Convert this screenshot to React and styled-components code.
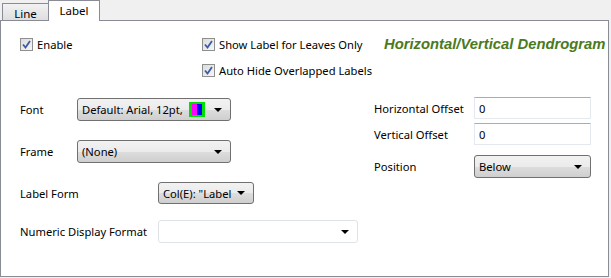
import React from "react";
import styled, { createGlobalStyle } from "styled-components";

const Global = createGlobalStyle`
  html, body { margin: 0; padding: 0; background: #f0f0f0; }
  body { font-family: "Noto Sans", "Open Sans", sans-serif; font-size: 11.2px; color: #000; }
`;

const Window = styled.div`
  width: 611px;
  height: 278px;
  background: #f0f0f0;
  overflow: hidden;
`;

const TabStrip = styled.div`
  display: flex;
  align-items: flex-end;
  height: 20px;
  padding-left: 2px;
  position: relative;
  z-index: 1;
`;

const Tab = styled.div`
  box-sizing: border-box;
  display: flex;
  align-items: center;
  justify-content: center;
  border: 1px solid #898c95;
  border-bottom: none;
  font-size: 11.5px;
  ${(p) =>
    p.$active
      ? `height: 21px; margin-bottom: -1px; width: 52px; background: #fff; padding-bottom: 2px;`
      : `height: 17px; width: 46px; border-right: none; background: linear-gradient(#f2f2f2, #dedede); padding-top: 2px;`}
`;

const Panel = styled.div`
  box-sizing: border-box;
  width: 609px;
  height: 257px;
  border: 1px solid #898c95;
  background: #fff;
  padding: 17px 0 0 19px;
`;

const TopGrid = styled.div`
  display: grid;
  grid-template-columns: 182px 182px 1fr;
  grid-template-rows: 13px 13px;
  row-gap: 13px;
`;

const Check = styled.label`
  display: flex;
  align-items: center;
  height: 13px;
  gap: 4px;
  white-space: nowrap;
`;

const Box = styled.span`
  box-sizing: border-box;
  width: 13px;
  height: 13px;
  border: 1px solid #8e8f8f;
  background: linear-gradient(135deg, #dcdcdc, #f6f6f6);
  display: flex;
  align-items: center;
  justify-content: center;
  flex: none;
`;

const Title = styled.div`
  font-family: "Liberation Sans", Arial, sans-serif;
  font-weight: bold;
  font-style: italic;
  font-size: 14.8px;
  color: #4b7a1c;
  line-height: 13px;
  white-space: nowrap;
`;

const Lower = styled.div`
  display: flex;
  margin-top: 21px;
`;

const LeftCol = styled.div`
  display: flex;
  flex-direction: column;
  width: 354px;
`;

const RightCol = styled.div`
  display: flex;
  flex-direction: column;
  margin-top: -1px;
`;

const Row = styled.div`
  display: flex;
  align-items: center;
  margin-top: ${(p) => p.$mt || 0}px;
`;

const Label = styled.span`
  width: ${(p) => p.$w}px;
  flex: none;
  white-space: nowrap;
`;

const Combo = styled.div`
  box-sizing: border-box;
  position: relative;
  width: ${(p) => p.$w}px;
  height: ${(p) => p.$h || 23}px;
  border: 1px solid ${(p) => (p.$plain ? "#dfe3e8" : "#707070")};
  border-radius: 3px;
  background: ${(p) => (p.$plain ? "#fff" : "linear-gradient(#f2f2f2 0%, #ebebeb 50%, #dddddd 51%, #cfcfcf 100%)")};
  display: flex;
  align-items: center;
  padding: 0 18px 0 4px;
  white-space: nowrap;
`;

const ComboText = styled.span`
  flex: 1;
  min-width: 0;
  overflow: hidden;
`;

const Arrow = styled.span`
  position: absolute;
  right: 8px;
  top: 50%;
  margin-top: -2px;
  width: 0;
  height: 0;
  border-left: 4px solid transparent;
  border-right: 4px solid transparent;
  border-top: 4px solid #000;
`;

const Swatch = styled.span`
  box-sizing: border-box;
  width: 16px;
  height: 15px;
  border: 2px solid #00e000;
  border-left-width: 3px;
  border-right-width: 3px;
  background: linear-gradient(90deg, #ff00ff 0 50%, #0000ff 50% 100%);
  margin-right: 7px;
  flex: none;
`;

const Input = styled.div`
  box-sizing: border-box;
  width: 117px;
  height: 22px;
  border: 1px solid #e3e9ef;
  border-top-color: #abadb3;
  background: #fff;
  display: flex;
  align-items: center;
  padding-left: 4px;
`;

const CheckMark = () => (
  <svg width="9" height="9" viewBox="0 0 9 9">
    <path d="M1 4.5 L3.5 7.5 L8 1" fill="none" stroke="#3c5aa6" strokeWidth="1.8" />
  </svg>
);

const CheckItem = ({ children }) => (
  <Check>
    <Box>
      <CheckMark />
    </Box>
    {children}
  </Check>
);

export default function App() {
  return (
    <Window>
      <Global />
      <TabStrip>
        <Tab>Line</Tab>
        <Tab $active>Label</Tab>
      </TabStrip>
      <Panel>
        <TopGrid>
          <CheckItem>Enable</CheckItem>
          <CheckItem>Show Label for Leaves Only</CheckItem>
          <Title>Horizontal/Vertical Dendrogram</Title>
          <span />
          <CheckItem>Auto Hide Overlapped Labels</CheckItem>
        </TopGrid>
        <Lower>
          <LeftCol>
            <Row>
              <Label $w={57}>Font</Label>
              <Combo $w={154}>
                <ComboText>Default: Arial, 12pt,</ComboText>
                <Swatch />
                <Arrow />
              </Combo>
            </Row>
            <Row $mt={19}>
              <Label $w={57}>Frame</Label>
              <Combo $w={154}>
                <ComboText>(None)</ComboText>
                <Arrow />
              </Combo>
            </Row>
            <Row $mt={19}>
              <Label $w={138}>Label Form</Label>
              <Combo $w={96} $h={22}>
                <ComboText>Col(E): "Label</ComboText>
                <Arrow />
              </Combo>
            </Row>
            <Row $mt={16}>
              <Label $w={138}>Numeric Display Format</Label>
              <Combo $w={200} $plain>
                <ComboText />
                <Arrow />
              </Combo>
            </Row>
          </LeftCol>
          <RightCol>
            <Row>
              <Label $w={100}>Horizontal Offset</Label>
              <Input>0</Input>
            </Row>
            <Row $mt={4}>
              <Label $w={100}>Vertical Offset</Label>
              <Input>0</Input>
            </Row>
            <Row $mt={10}>
              <Label $w={100}>Position</Label>
              <Combo $w={117}>
                <ComboText>Below</ComboText>
                <Arrow />
              </Combo>
            </Row>
          </RightCol>
        </Lower>
      </Panel>
    </Window>
  );
}
